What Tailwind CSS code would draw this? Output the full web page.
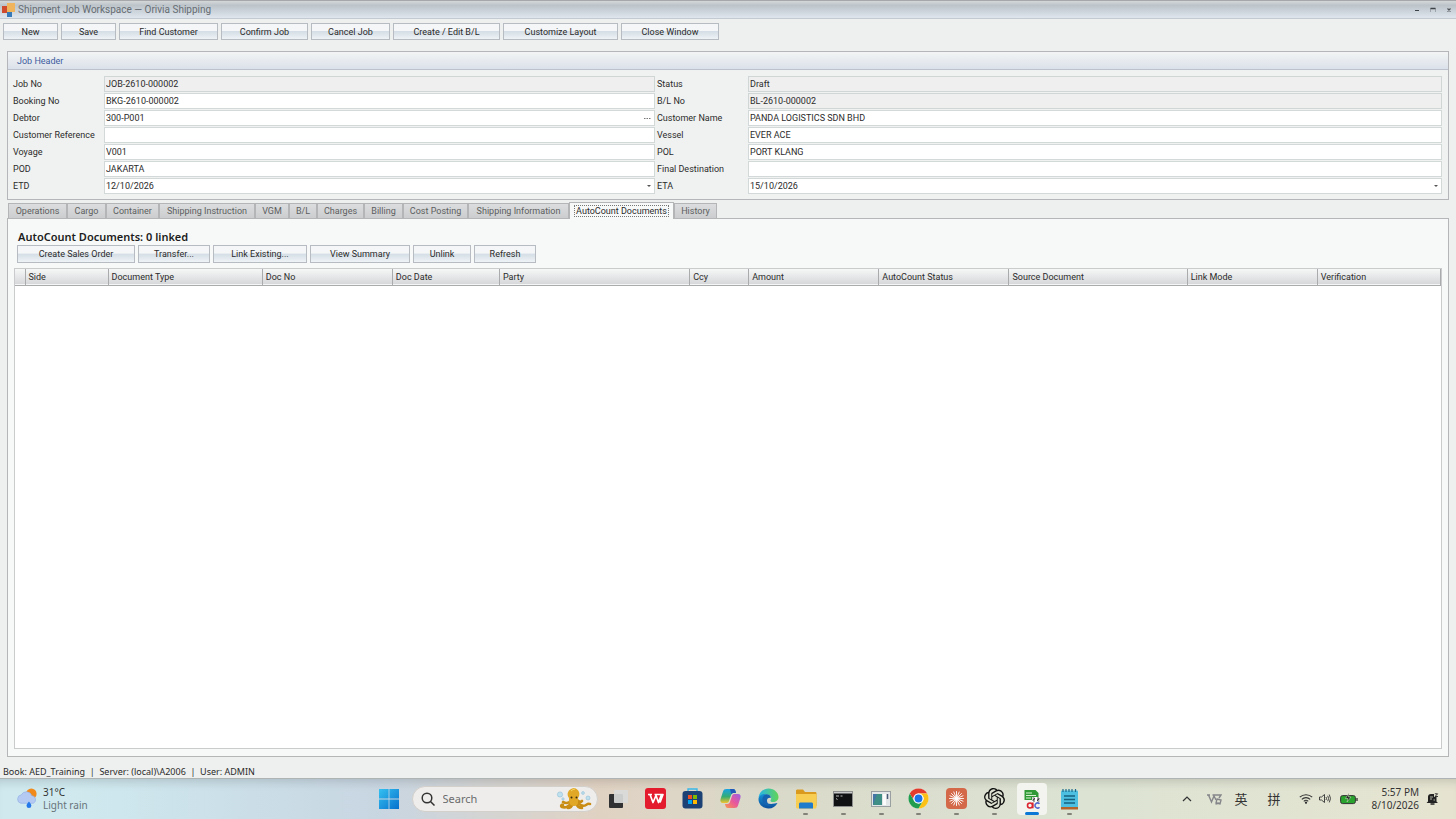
<!DOCTYPE html>
<html lang="en">
<head>
  <meta charset="UTF-8">
  <meta name="viewport" content="width=device-width,initial-scale=1">
  <title>Shipment Job Workspace — Orivia Shipping</title>
  <script src="https://cdn.jsdelivr.net/npm/@tailwindcss/browser@4"></script>
</head>
<body class="h-screen flex flex-col overflow-hidden bg-[#eef0ef] font-[Roboto,sans-serif] text-[9px] leading-3 text-[#2b2b2b]">

  <!-- Title bar -->
  <header class="flex h-[19px] shrink-0 items-center gap-[2px] border-t border-b border-t-[#a5a7ab] border-b-[#c3cad2] bg-linear-to-b from-[#d5d8d8] via-[#bcc4ca] via-25% to-[#dfe6ee] pl-[2px] pr-[3px]">
    <svg class="size-[14px]" viewBox="0 0 14 14">
      <rect x="0" y="3" width="5" height="7" fill="#cf4a2c"/>
      <rect x="5" y="9" width="5" height="5" fill="#3579b8"/>
      <rect x="5" y="0" width="8" height="9" fill="#f0b45c"/>
    </svg>
    <h1 class="text-[10px] text-[#666c72]">Shipment Job Workspace — Orivia Shipping</h1>
    <div class="ml-auto flex gap-2">
      <button aria-label="Minimize"><svg class="size-2" viewBox="0 0 8 8"><path d="M2 4.500h4" stroke="#3e4347"/></svg></button>
      <button aria-label="Restore"><svg class="size-2" viewBox="0 0 8 8"><path d="M1.500 6V2.500h5V6" fill="none" stroke="#8b9197" stroke-width=".7"/><path d="M1.500 2.500h5" stroke="#3e4347" stroke-width="1.500"/></svg></button>
      <button aria-label="Close"><svg class="size-2" viewBox="0 0 8 8"><path d="M2.500 2.500l3 3M5.500 2.500l-3 3" stroke="#4d5257" stroke-width="1.200"/></svg></button>
    </div>
  </header>

  <!-- Toolbar -->
  <nav class="mt-1 ml-[3px] flex h-[17px] shrink-0 gap-[3px] *:border *:border-[#b7bcc2] *:bg-linear-to-b *:from-[#f4f6f7] *:from-45% *:via-[#d5dee6] *:via-50% *:to-[#eef3f6]">
    <button class="w-[55px]">New</button>
    <button class="w-[55px]">Save</button>
    <button class="w-[99px]">Find Customer</button>
    <button class="w-[87px]">Confirm Job</button>
    <button class="w-[79px]">Cancel Job</button>
    <button class="w-[107px]">Create / Edit B/L</button>
    <button class="w-[115px]">Customize Layout</button>
    <button class="w-[98px]">Close Window</button>
  </nav>

  <!-- Job header -->
  <section class="mx-[7px] mt-[11px] shrink-0 border border-[#b4b6ba] bg-[#f0f2f1]">
    <h2 class="h-[18px] border-b border-[#bcc1cb] bg-linear-to-b from-[#f3f5f5] to-[#dbe1ea] pl-[9px] leading-[18px] text-[#3d5c9e]">Job Header</h2>
    <form class="grid grid-cols-[91px_551fr_93px_694fr] gap-y-px pt-[6px] pr-[6px] pb-[5px] pl-[5px] leading-4">
      <label for="job-no">Job No</label>
      <input id="job-no" readonly value="JOB-2610-000002" class="h-4 min-w-0 border border-[#d0d5d5] bg-[#efefef] px-px">
      <label for="status" class="pl-[2px]">Status</label>
      <input id="status" readonly value="Draft" class="h-4 min-w-0 border border-[#d0d5d5] bg-[#efefef] px-px">

      <label for="booking-no">Booking No</label>
      <input id="booking-no" value="BKG-2610-000002" class="h-4 min-w-0 border border-[#d3d8d8] bg-white px-px">
      <label for="bl-no" class="pl-[2px]">B/L No</label>
      <input id="bl-no" readonly value="BL-2610-000002" class="h-4 min-w-0 border border-[#d0d5d5] bg-[#efefef] px-px">

      <label for="debtor">Debtor</label>
      <div class="flex h-4 items-center border border-[#d3d8d8] bg-white px-px">
        <input id="debtor" value="300-P001" class="min-w-0 grow">
        <button type="button" aria-label="Browse debtors" class="w-3"><svg class="mx-auto h-[3px] w-[7px]" viewBox="0 0 7 3"><path d="M0 1.500h7" stroke="#777" stroke-dasharray="1.500 1"/></svg></button>
      </div>
      <label for="customer-name" class="pl-[2px]">Customer Name</label>
      <input id="customer-name" value="PANDA LOGISTICS SDN BHD" class="h-4 min-w-0 border border-[#d3d8d8] bg-white px-px">

      <label for="customer-ref">Customer Reference</label>
      <input id="customer-ref" class="h-4 min-w-0 border border-[#d3d8d8] bg-white px-px">
      <label for="vessel" class="pl-[2px]">Vessel</label>
      <input id="vessel" value="EVER ACE" class="h-4 min-w-0 border border-[#d3d8d8] bg-white px-px">

      <label for="voyage">Voyage</label>
      <input id="voyage" value="V001" class="h-4 min-w-0 border border-[#d3d8d8] bg-white px-px">
      <label for="pol" class="pl-[2px]">POL</label>
      <input id="pol" value="PORT KLANG" class="h-4 min-w-0 border border-[#d3d8d8] bg-white px-px">

      <label for="pod">POD</label>
      <input id="pod" value="JAKARTA" class="h-4 min-w-0 border border-[#d3d8d8] bg-white px-px">
      <label for="final-dest" class="pl-[2px]">Final Destination</label>
      <input id="final-dest" class="h-4 min-w-0 border border-[#d3d8d8] bg-white px-px">

      <label for="etd">ETD</label>
      <div class="flex h-4 items-center border border-[#d3d8d8] bg-white px-px">
        <input id="etd" value="12/10/2026" class="min-w-0 grow">
        <button type="button" aria-label="Pick ETD" class="w-2"><svg class="mx-auto h-[2px] w-1" viewBox="0 0 4 2"><path d="M0 0h4L2 2z" fill="#555"/></svg></button>
      </div>
      <label for="eta" class="pl-[2px]">ETA</label>
      <div class="flex h-4 items-center border border-[#d3d8d8] bg-white px-px">
        <input id="eta" value="15/10/2026" class="min-w-0 grow">
        <button type="button" aria-label="Pick ETA" class="w-2"><svg class="mx-auto h-[2px] w-1" viewBox="0 0 4 2"><path d="M0 0h4L2 2z" fill="#555"/></svg></button>
      </div>
    </form>
  </section>

  <!-- Tabs -->
  <div role="tablist" class="mx-2 mt-[2px] flex h-4 shrink-0 items-end text-[#5c5e60] *:h-[15px] *:border *:border-b-0 *:border-[#b3b5b7]">
    <button role="tab" class="w-[59px] bg-linear-to-b from-[#dcddde] to-[#cbcdce]">Operations</button>
    <button role="tab" class="w-[39px] bg-linear-to-b from-[#dcddde] to-[#cbcdce]">Cargo</button>
    <button role="tab" class="w-[53px] bg-linear-to-b from-[#dcddde] to-[#cbcdce]">Container</button>
    <button role="tab" class="w-[96px] bg-linear-to-b from-[#dcddde] to-[#cbcdce]">Shipping Instruction</button>
    <button role="tab" class="w-[34px] bg-linear-to-b from-[#dcddde] to-[#cbcdce]">VGM</button>
    <button role="tab" class="w-[28px] bg-linear-to-b from-[#dcddde] to-[#cbcdce]">B/L</button>
    <button role="tab" class="w-[47px] bg-linear-to-b from-[#dcddde] to-[#cbcdce]">Charges</button>
    <button role="tab" class="w-[39px] bg-linear-to-b from-[#dcddde] to-[#cbcdce]">Billing</button>
    <button role="tab" class="w-[65px] bg-linear-to-b from-[#dcddde] to-[#cbcdce]">Cost Posting</button>
    <button role="tab" class="w-[101px] bg-linear-to-b from-[#dcddde] to-[#cbcdce]">Shipping Information</button>
    <button role="tab" aria-selected="true" class="z-10 -mb-px h-[17px]! w-[105px] bg-[#f7f9f8] text-[#2b2b2b]"><span class="border border-dotted border-[#777] px-px whitespace-nowrap">AutoCount Documents</span></button>
    <button role="tab" class="w-[43px] bg-linear-to-b from-[#dcddde] to-[#cbcdce]">History</button>
  </div>

  <!-- AutoCount documents -->
  <main class="mx-[7px] flex min-h-0 grow flex-col border border-[#b4b6b8] bg-[#f7f9f8] px-[6px] pt-[10px] pb-[7px]">
    <h2 class="ml-1 font-['Noto_Sans',sans-serif] text-[11px] leading-4 font-semibold text-[#1c1c1c]">AutoCount Documents: 0 linked</h2>
    <div class="ml-[3px] flex h-[18px] shrink-0 gap-[3px] *:border *:border-[#b7bcc2] *:bg-linear-to-b *:from-[#f4f6f7] *:from-45% *:via-[#d5dee6] *:via-50% *:to-[#eef3f6]">
      <button class="w-[118px]">Create Sales Order</button>
      <button class="w-[72px]">Transfer...</button>
      <button class="w-[94px]">Link Existing...</button>
      <button class="w-[100px]">View Summary</button>
      <button class="w-[58px]">Unlink</button>
      <button class="w-[62px]">Refresh</button>
    </div>
    <div class="mt-[5px] grow border border-[#c9cbcc] bg-white">
      <table class="w-full table-fixed border-collapse text-left">
        <colgroup>
          <col class="w-[10px]"><col class="w-[83px]"><col class="w-[154px]"><col class="w-[130px]"><col class="w-[107px]"><col class="w-[190px]"><col class="w-[59px]"><col class="w-[130px]"><col class="w-[130px]"><col class="w-[178px]"><col class="w-[130px]"><col class="w-[123px]">
        </colgroup>
        <thead>
          <tr class="h-4 border-b border-[#a9abad] bg-linear-to-b from-[#f6f7f7] to-[#d7d8da] *:border-r *:border-[#a9abad] *:p-0 *:pl-[3px] *:font-normal">
            <td></td>
            <th>Side</th>
            <th>Document Type</th>
            <th>Doc No</th>
            <th>Doc Date</th>
            <th>Party</th>
            <th>Ccy</th>
            <th>Amount</th>
            <th>AutoCount Status</th>
            <th>Source Document</th>
            <th>Link Mode</th>
            <th>Verification</th>
          </tr>
        </thead>
      </table>
    </div>
  </main>

  <p class="mt-[9px] ml-[3px] h-3 shrink-0 font-['Noto_Sans',sans-serif] whitespace-pre">Book: AED_Training  |  Server: (local)\A2006  |  User: ADMIN</p>

  <!-- Taskbar -->
  <footer class="grid h-[41px] shrink-0 grid-cols-[1fr_auto_1fr] border-t border-[#aeb3b3] bg-[linear-gradient(to_right,#cfe9ef_5%,#c8d6e2_26%,#e0d2c3_41%,#dad9c9_52%,#dce3d3_74%,#e6e4d1)] pb-px font-['Noto_Sans','Noto_Sans_CJK_SC',sans-serif] text-[10px] leading-[13px] text-[#333] shadow-[inset_0_9px_10px_-6px_rgb(0_0_0/0.14)]">
    <div class="flex items-center gap-1 pl-4">
      <svg class="size-[23px]" viewBox="0 0 24 24">
        <circle cx="16" cy="7" r="5.500" fill="#f08a1d"/>
        <path d="M5 17a4.500 4.500 0 0 1 .5-8.800A6 6 0 0 1 16.500 9 4.200 4.200 0 0 1 18 17z" fill="#b4caf2" stroke="#8eabe2" stroke-width=".6"/>
        <path d="M13.500 15c2 2.500 2.500 3.300 2.500 4.500a2.500 2.500 0 0 1-5 0c0-1.200.5-2 2.500-4.500z" fill="#2478ea"/>
      </svg>
      <div>
        <p>31°C</p>
        <p class="text-[#68747a]">Light rain</p>
      </div>
    </div>

    <div class="flex items-center pl-[2px]">
      <button aria-label="Start" class="flex w-[30px] justify-center">
        <svg class="size-5" viewBox="0 0 20 20">
          <defs><linearGradient id="win" x2="1" y2="1"><stop stop-color="#35c1f1"/><stop offset="1" stop-color="#0670cc"/></linearGradient></defs>
          <path d="M0 0h9.600v9.600H0zM10.400 0H20v9.600h-9.600zM0 10.400h9.600V20H0zM10.400 10.400H20V20h-9.600z" fill="url(#win)"/>
        </svg>
      </button>
      <div class="ml-2 flex h-[26px] w-[186px] items-center gap-2 rounded-full border border-[#d3d0cc] bg-[#eeedeb] pr-[5px] pl-2">
        <svg class="size-[14px] shrink-0" viewBox="0 0 14 14" fill="none" stroke="#333" stroke-width="1.500"><circle cx="6" cy="6" r="4.800"/><path d="M9.500 9.500l4 4"/></svg>
        <input type="search" aria-label="Search" placeholder="Search" class="min-w-0 grow text-[11px] placeholder:text-[#6b6b6b]">
        <svg class="h-[22px] w-9 shrink-0" viewBox="0 0 36 22">
          <g fill="#bfe1ee" stroke="#90bcd6" stroke-width=".6"><circle cx="4" cy="6.500" r="2.600"/><circle cx="27" cy="5" r="1.400"/><circle cx="32" cy="10" r="2"/><circle cx="7" cy="11" r="1.200"/></g>
          <g fill="none" stroke="#c98d16" stroke-width="2.600" stroke-linecap="round"><path d="M15 12c-2 4-6 3-8 2M15 14c-1 5-6 6-9 5-2-1 0-3 1-2M17 15c-1 3-2 5-5 5M20 15c1 3 3 5 6 5M21 13c2 4 6 6 9 4s3-1 4-1M21 12c2 2 4 2 5 1"/></g>
          <path d="M13 10c-3-4-1-9 5-10 5 1 7 6 4 10 0 4 1 8-4 8s-5-4-5-8z" fill="#e0a826"/>
          <path d="M15 3q2-2 4-2" stroke="#f5d566" fill="none"/>
          <circle cx="15.500" cy="9.500" r="1" fill="#3c2c10"/><circle cx="20.500" cy="9.500" r="1" fill="#3c2c10"/>
        </svg>
      </div>

      <div class="ml-[5px] flex w-[482px] items-center justify-between *:relative *:flex *:h-8 *:w-[30px] *:items-center *:justify-center">
        <button aria-label="Task view"><svg class="size-5" viewBox="0 0 20 20"><rect x="1" y="5" width="14" height="14" rx="1" fill="#303132"/><rect x="6" y="1" width="14" height="13" rx="1" fill="#d9dada" fill-opacity=".92"/></svg></button>
        <button aria-label="WPS Office"><svg class="size-[21px]" viewBox="0 0 21 21"><rect width="21" height="21" rx="3" fill="#e31b2c"/><path d="M3 6.500h4M5 6.500l3 8L11 7.500l2.500 7 3-8h-7M14.500 6.500h3.500l-3 8" fill="none" stroke="#fff" stroke-width="1.700" stroke-linejoin="round"/></svg></button>
        <button aria-label="Microsoft Store"><svg class="size-[21px]" viewBox="0 0 21 21"><path d="M6 4V1h9v3" fill="none" stroke="#3ab7e6" stroke-width="1.400"/><rect x=".5" y="3" width="20" height="17.500" rx="3" fill="#1c4275"/><path d="M6 7h4v4H6z" fill="#f25022"/><path d="M11 7h4v4h-4z" fill="#7fba00"/><path d="M6 12h4v4H6z" fill="#00a4ef"/><path d="M11 12h4v4h-4z" fill="#ffb900"/></svg></button>
        <button aria-label="Copilot">
          <svg class="size-[21px]" viewBox="0 0 21 21">
            <defs>
              <linearGradient id="cpA" x2="0" y2="1"><stop stop-color="#18a2e4"/><stop offset=".55" stop-color="#35ad72"/><stop offset="1" stop-color="#f2c22a"/></linearGradient>
              <linearGradient id="cpB" x1="1" x2="0" y2="1"><stop stop-color="#9a5fe4"/><stop offset=".5" stop-color="#e9579b"/><stop offset="1" stop-color="#f79a4c"/></linearGradient>
            </defs>
            <path d="M6.500 1H13c2 0 2.500 1.500 3 4h-2.500c-1.500 0-2.200 1-2.600 2.500L9 13c-.5 1.500-1.200 2-3 2H3c-2.500 0-3-2-2.400-4L3 3.500C3.500 1.800 4.500 1 6.500 1z" fill="url(#cpA)"/>
            <path d="M14.500 20H8c-2 0-2.500-1.500-3-4h2.500c1.500 0 2.200-1 2.600-2.500L12 8c.5-1.500 1.200-2 3-2h3c2.500 0 3 2 2.400 4L18 17.500c-.5 1.700-1.500 2.500-3.500 2.500z" fill="url(#cpB)"/>
            <path d="M10 1h3c2 0 2.500 1.500 3 4h-2.500c-1 0-1.800.5-2.200 1.500z" fill="#2358b8"/>
          </svg>
        </button>
        <button aria-label="Edge">
          <svg class="size-[21px]" viewBox="0 0 21 21">
            <defs>
              <linearGradient id="edA" x2="1"><stop stop-color="#26b5e8"/><stop offset="1" stop-color="#62d456"/></linearGradient>
              <linearGradient id="edB" x2="0" y2="1"><stop stop-color="#1693d5"/><stop offset="1" stop-color="#0d4f9c"/></linearGradient>
            </defs>
            <path d="M.5 9.500C1.500 4 5.500.5 10.500.5c6 0 10 4.200 10 8.500 0 3.200-2.500 5-5.200 5-2.600 0-3.300-1-2.600-2 1.600-3-.7-5.500-4-5.500-3.700 0-6.700 1.500-8.200 3z" fill="url(#edA)"/>
            <path d="M.5 10.500C1 7.500 4 5.500 7.500 6c-3 1.500-3 12 9 9.500 1.600-.4 2.500-.8 3-.5-1.700 3.500-5 5.500-9 5.500-6 0-10.300-4.500-10-10z" fill="url(#edB)"/>
            <path d="M7.500 6.300c2.700-.6 5.500.9 5.500 3.700-.8-.6-3.700-.5-4 2.200-.2 2 1.200 4.800 4.500 5.600-5.200.7-9.500-2.800-9-7.300.2-1.800 1.300-3.600 3-4.200z" fill="#1564b2"/>
          </svg>
        </button>
        <button aria-label="File Explorer"><svg class="size-[22px]" viewBox="0 0 22 22"><path d="M1 3c0-1 .5-1.500 1.500-1.500H8L10 4h10c1 0 1.500.5 1.500 1.500V18H1z" fill="#d99a1e"/><path d="M1 6h20.500v13c0 .8-.5 1.500-1.500 1.500H2.500C1.500 20.500 1 19.800 1 19z" fill="#f7ce52"/><path d="M4 20.500V16c0-1 .7-1.500 1.500-1.500h11c.8 0 1.500.5 1.500 1.500v4.500z" fill="#1f7bcb"/></svg><i class="absolute bottom-0 h-[2px] w-[5px] rounded-full bg-[#828279]"></i></button>
        <button aria-label="Command Prompt"><svg class="size-5" viewBox="0 0 20 20"><rect x=".5" y="2.500" width="19" height="15" fill="#101112" stroke="#8d8f8f"/><path d="M1 3h18v1.500H1z" fill="#c9caca"/><path d="M3 7h3M7.500 7h2M3 9.500l1.500 1" stroke="#cfcfcf" stroke-width=".9"/></svg><i class="absolute bottom-0 h-[2px] w-[5px] rounded-full bg-[#828279]"></i></button>
        <button aria-label="Server Manager"><svg class="size-5" viewBox="0 0 20 20"><rect x=".5" y="2.500" width="19" height="15" fill="#e2e6e6" stroke="#9aa0a2"/><rect x="2" y="5" width="9" height="11" fill="#3f8f86"/><path d="M2 16V5h4z" fill="#4576a5"/><rect x="12" y="5" width="3" height="11" fill="#fbfbfb"/><path d="M16.500 5v5" stroke="#4a5b78" stroke-width="1.500"/></svg><i class="absolute bottom-0 h-[2px] w-[5px] rounded-full bg-[#828279]"></i></button>
        <button aria-label="Chrome"><svg class="size-[21px]" viewBox="0 0 48 48"><circle cx="24" cy="24" r="23" fill="#fff"/><path d="M4.100 12.500A23 23 0 0 1 43.900 12.500H24A11.500 11.500 0 0 0 14 29.800z" fill="#e33b2e"/><path d="M43.900 12.500A23 23 0 0 1 24 47L34 29.800A11.500 11.500 0 0 0 24 12.500z" fill="#fbc116"/><path d="M24 47A23 23 0 0 1 4.100 12.500L14 29.800a11.500 11.500 0 0 0 20 0z" fill="#219d50"/><circle cx="24" cy="24" r="11.500" fill="#fff"/><circle cx="24" cy="24" r="9" fill="#1a73e8"/></svg><i class="absolute bottom-0 h-[2px] w-[5px] rounded-full bg-[#828279]"></i></button>
        <button aria-label="Claude"><svg class="size-[21px]" viewBox="0 0 21 21"><rect width="21" height="21" rx="4" fill="#d4694a"/><path d="M10.500 3.500v14M3.500 10.500h14M5.500 5.500l10 10M15.500 5.500l-10 10M7.800 4l5.400 13M13.200 4L7.800 17M4 7.800l13 5.400M4 13.200l13-5.400" stroke="#fff" stroke-width=".9" stroke-linecap="round"/></svg><i class="absolute bottom-0 h-[2px] w-[5px] rounded-full bg-[#828279]"></i></button>
        <button aria-label="ChatGPT">
          <svg class="size-[21px]" viewBox="0 0 24 24" fill="#111">
            <path d="M22.2819 9.8211a5.9847 5.9847 0 0 0-.5157-4.9108 6.0462 6.0462 0 0 0-6.5098-2.9A6.0651 6.0651 0 0 0 4.9807 4.1818a5.9847 5.9847 0 0 0-3.9977 2.9 6.0462 6.0462 0 0 0 .7427 7.0966 5.98 5.98 0 0 0 .511 4.9107 6.051 6.051 0 0 0 6.5146 2.9001A5.9847 5.9847 0 0 0 13.2599 24a6.0557 6.0557 0 0 0 5.7718-4.2058 5.9894 5.9894 0 0 0 3.9977-2.9001 6.0557 6.0557 0 0 0-.7475-7.0729zm-9.022 12.6081a4.4755 4.4755 0 0 1-2.8764-1.0408l.1419-.0804 4.7783-2.7582a.7948.7948 0 0 0 .3927-.6813v-6.7369l2.02 1.1686a.071.071 0 0 1 .038.052v5.5826a4.504 4.504 0 0 1-4.4945 4.4944zm-9.6607-4.1254a4.4708 4.4708 0 0 1-.5346-3.0137l.142.0852 4.783 2.7582a.7712.7712 0 0 0 .7806 0l5.8428-3.3685v2.3324a.0804.0804 0 0 1-.0332.0615L9.74 19.9502a4.4992 4.4992 0 0 1-6.1408-1.6464zM2.3408 7.8956a4.485 4.485 0 0 1 2.3655-1.9728V11.6a.7664.7664 0 0 0 .3879.6765l5.8144 3.3543-2.0201 1.1685a.0757.0757 0 0 1-.071 0l-4.8303-2.7865A4.504 4.504 0 0 1 2.3408 7.872zm16.5963 3.8558L13.1038 8.364 15.1192 7.2a.0757.0757 0 0 1 .071 0l4.8303 2.7913a4.4944 4.4944 0 0 1-.6765 8.1042v-5.6772a.79.79 0 0 0-.407-.667zm2.0107-3.0231l-.142-.0852-4.7735-2.7818a.7759.7759 0 0 0-.7854 0L9.409 9.2297V6.8974a.0662.0662 0 0 1 .0284-.0615l4.8303-2.7866a4.4992 4.4992 0 0 1 6.6802 4.66zM8.3065 12.863l-2.02-1.1638a.0804.0804 0 0 1-.038-.0567V6.0742a4.4992 4.4992 0 0 1 7.3757-3.4537l-.142.0805L8.704 5.459a.7948.7948 0 0 0-.3927.6813zm1.0976-2.3654l2.602-1.4998 2.6069 1.4998v2.9994l-2.5974 1.4997-2.6067-1.4997Z"/>
          </svg><i class="absolute bottom-0 h-[2px] w-[5px] rounded-full bg-[#828279]"></i>
        </button>
        <button aria-label="AutoCount" class="rounded bg-[#f3f4ef]"><svg class="size-5" viewBox="0 0 20 20"><path d="M2.500 1h11l3 3v7h-14z" fill="#2f9a35"/><path d="M4 4h6M4 6.500h10M4 9h5" stroke="#d9f2d4" stroke-width="1.200"/><path d="M10 8h8v5h-8z" fill="#fff"/><path d="M10.500 9h2v1.500h-1.500V12h2M15 9h2v1.500h-1.500V12h2" fill="none" stroke="#222" stroke-width=".8"/><circle cx="8" cy="16.500" r="2.500" fill="none" stroke="#dc2430" stroke-width="1.600"/><path d="M10.800 13.500v5.700" stroke="#dc2430" stroke-width="1.600"/><path d="M17.500 14.800a2.600 2.500 0 1 0 0 3.400" fill="none" stroke="#5468cf" stroke-width="1.600"/></svg><i class="absolute bottom-0 h-[3px] w-[14px] rounded-full bg-[#0b78d6]"></i></button>
        <button aria-label="Notepad"><svg class="size-[22px]" viewBox="0 0 22 22"><rect x="3" y="2.500" width="17" height="17" rx="1" fill="#4dbfe0"/><path d="M3 19h17v2.500H3z" fill="#b4632a"/><path d="M5 1v3M8 1v3M11 1v3M14 1v3M17.500 1v3" stroke="#1b6b8c" stroke-width="1.200"/><path d="M6 8h11M6 11.500h11M6 15h11" stroke="#17617f" stroke-width="1.300"/></svg><i class="absolute bottom-0 h-[2px] w-[5px] rounded-full bg-[#828279]"></i></button>
      </div>
    </div>

    <div class="flex items-center justify-end pr-[17px]">
      <svg class="mr-[15px] h-[6px] w-[10px]" viewBox="0 0 10 6"><path d="M1 5l4-4 4 4" fill="none" stroke="#333" stroke-width="1.200"/></svg>
      <svg class="mr-3 h-3 w-[15px]" viewBox="0 0 15 12" fill="none" stroke="#85868a" stroke-width="1.400"><path d="M0 2h3M1.500 2l3 7L7 3l2 4M5.500 2H14l-2 3"/><path d="M8.500 11l4.500-1M10 6l4 1-1 4-4-1z"/></svg>
      <span class="mr-5 text-[13px] leading-4">英</span>
      <span class="mr-[18px] text-[13px] leading-4">拼</span>
      <svg class="mr-[6px] h-[11px] w-[14px]" viewBox="0 0 14 11" fill="none" stroke="#333" stroke-width="1.100"><path d="M.8 4.200a9 9 0 0 1 12.400 0M2.800 6.300a6 6 0 0 1 8.400 0M4.800 8.300a3.200 3.200 0 0 1 4.400 0"/><circle cx="7" cy="9.700" r=".6" fill="#333"/></svg>
      <svg class="mr-[9px] h-[11px] w-3" viewBox="0 0 12 11" fill="none" stroke="#333" stroke-width=".9"><path d="M.5 4v3h2L5.500 9.500v-8L2.500 4z"/><path d="M7 4q1 1.500 0 3M8.700 2.800q1.800 2.700 0 5.400M10.300 1.600q2.400 3.900 0 7.800"/></svg>
      <svg class="mr-[14px] h-3 w-[18px]" viewBox="0 0 18 12"><rect x=".6" y="2.600" width="14.800" height="8" rx="2" fill="#29a32d" stroke="#333"/><path d="M17 5v3" stroke="#333" stroke-width="1.300"/><path d="M9 0L5.500 5.500H8L7 9l4-5H8.500z" fill="#222" stroke="#dfe8cf" stroke-width=".5"/></svg>
      <div class="mr-[7px] text-right">
        <p>5:57 PM</p>
        <p>8/10/2026</p>
      </div>
      <svg class="h-3 w-[13px]" viewBox="0 0 13 12"><path d="M2 8.500V4a3 3 0 0 1 3-3h3v3h2.500v4.500L12 10H.5z" fill="#222"/><path d="M4.500 11h4" stroke="#222" stroke-width="1.500"/><path d="M8.800.8h2.800L9 3.500h3" fill="none" stroke="#222" stroke-width=".9"/><path d="M4 4h3M4 6h2M7.500 7h1.500" stroke="#d8dac8" stroke-width=".8"/></svg>
    </div>
  </footer>
</body>
</html>
